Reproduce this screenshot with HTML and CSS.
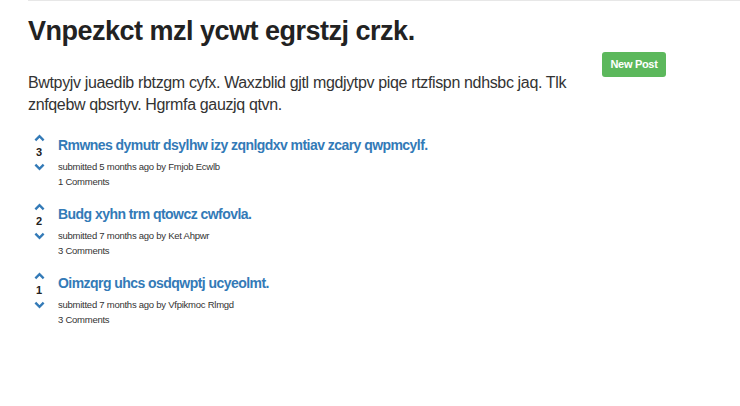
FILE: index.html
```html
<!DOCTYPE html>
<html>
<head>
<meta charset="utf-8">
<link rel="stylesheet" href="styles.css">
</head>
<body>
<div class="topline"></div>
<div class="page">
  <div class="header">
    <div class="intro">
      <h1 class="title">Vnpezkct mzl ycwt egrstzj crzk.</h1>
      <p class="lead">Bwtpyjv juaedib rbtzgm cyfx. Waxzblid gjtl mgdjytpv piqe rtzfispn ndhsbc jaq. Tlk znfqebw qbsrtyv. Hgrmfa gauzjq qtvn.</p>
    </div>
    <div class="actions">
      <a class="btn-new" href="#">New Post</a>
    </div>
  </div>

  <ul class="posts">
    <li class="post">
      <div class="vote">
        <svg class="chev" viewBox="0 0 12 8"><path d="M1.5 6.5 L6 2 L10.5 6.5" /></svg>
        <span class="score">3</span>
        <svg class="chev" viewBox="0 0 12 8"><path d="M1.5 1.5 L6 6 L10.5 1.5" /></svg>
      </div>
      <div class="body">
        <a class="post-title" href="#">Rmwnes dymutr dsylhw izy zqnlgdxv mtiav zcary qwpmcylf.</a>
        <div class="meta">submitted 5 months ago by Fmjob Ecwlb</div>
        <div class="meta">1 Comments</div>
      </div>
    </li>
    <li class="post">
      <div class="vote">
        <svg class="chev" viewBox="0 0 12 8"><path d="M1.5 6.5 L6 2 L10.5 6.5" /></svg>
        <span class="score">2</span>
        <svg class="chev" viewBox="0 0 12 8"><path d="M1.5 1.5 L6 6 L10.5 1.5" /></svg>
      </div>
      <div class="body">
        <a class="post-title" href="#">Budg xyhn trm qtowcz cwfovla.</a>
        <div class="meta">submitted 7 months ago by Ket Ahpwr</div>
        <div class="meta">3 Comments</div>
      </div>
    </li>
    <li class="post">
      <div class="vote">
        <svg class="chev" viewBox="0 0 12 8"><path d="M1.5 6.5 L6 2 L10.5 6.5" /></svg>
        <span class="score">1</span>
        <svg class="chev" viewBox="0 0 12 8"><path d="M1.5 1.5 L6 6 L10.5 1.5" /></svg>
      </div>
      <div class="body">
        <a class="post-title" href="#">Oimzqrg uhcs osdqwptj ucyeolmt.</a>
        <div class="meta">submitted 7 months ago by Vfpikmoc Rlmgd</div>
        <div class="meta">3 Comments</div>
      </div>
    </li>
  </ul>
</div>
</body>
</html>
```

FILE: styles.css
```css
html, body {
  margin: 0;
  padding: 0;
  background: #fff;
}
body {
  font-family: "Liberation Sans", Arial, sans-serif;
  color: #333;
}
.topline {
  margin-left: 28px;
  border-top: 1px solid #e7e7e7;
}
.page {
  padding: 0 28px;
}
.header {
  display: flex;
  align-items: flex-start;
}
.intro {
  flex: 0 0 574px;
}
.title {
  margin: 14px 0 0;
  font-size: 27px;
  letter-spacing: -0.5px;
  line-height: 32px;
  font-weight: bold;
  color: #222;
}
.lead {
  margin: 25px 0 0;
  font-size: 16px;
  letter-spacing: -0.35px;
  line-height: 22px;
  color: #333;
}
.actions {
  padding-top: 51px;
}
.btn-new {
  display: block;
  width: 64px;
  height: 25px;
  box-sizing: border-box;
  line-height: 25px;
  text-align: center;
  background: #5cb85c;
  border-radius: 3px;
  color: #fff;
  font-size: 11px;
  letter-spacing: -0.3px;
  font-weight: bold;
  text-decoration: none;
}
.posts {
  list-style: none;
  margin: 14px 0 0;
  padding: 0;
}
.post {
  display: flex;
  margin-bottom: 10px;
}
.vote {
  flex: 0 0 22px;
  display: flex;
  flex-direction: column;
  align-items: center;
  padding-top: 4px;
}
.chev {
  width: 11px;
  height: 8px;
  fill: none;
  stroke: #337ab7;
  stroke-width: 2.6;
  stroke-linecap: butt;
  stroke-linejoin: miter;
}
.score {
  font-size: 11px;
  font-weight: bold;
  color: #222;
  line-height: 13px;
  margin: 4px 0 4px;
}
.body {
  margin-left: 8px;
}
.post-title {
  display: block;
  font-size: 14px;
  letter-spacing: -0.55px;
  line-height: 20px;
  font-weight: bold;
  color: #337ab7;
  text-decoration: none;
  margin-top: 5px;
}
.meta {
  font-size: 9.5px;
  letter-spacing: -0.25px;
  line-height: 15px;
  color: #333;
  margin-top: 0;
}
.post-title + .meta {
  margin-top: 4px;
}
```
